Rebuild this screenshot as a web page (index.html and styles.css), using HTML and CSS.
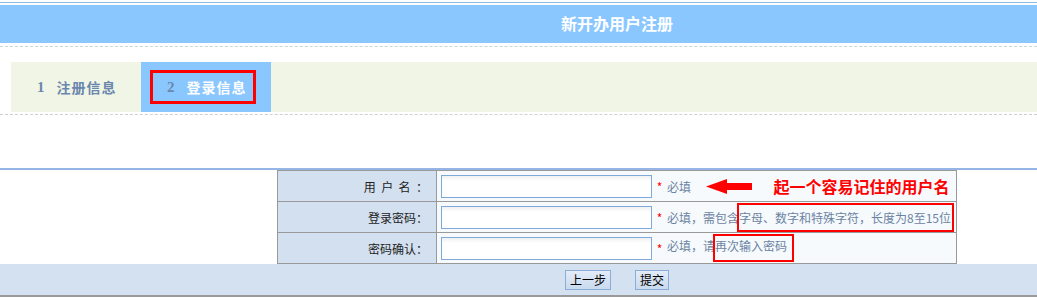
FILE: index.html
```html
<!DOCTYPE html>
<html lang="zh-CN">
<head>
    <meta charset="UTF-8">
    <meta name="viewport" content="width=device-width, initial-scale=1.0">
    <title>新开办用户注册</title>
    <link rel="stylesheet" href="styles.css">
</head>
<body>
    <div class="topline"></div>
    <div class="header">
        <div class="header-title">新开办用户注册</div>
    </div>
    <div class="dash dash-top"></div>

    <div class="steps">
        <div class="step">
            <span class="step-num">1</span>
            <span class="step-name">注册信息</span>
        </div>
        <div class="step step-active">
            <span class="step-mark">
                <span class="step-num">2</span>
                <span class="step-name">登录信息</span>
            </span>
        </div>
    </div>
    <div class="dash dash-bottom"></div>

    <div class="form-line"></div>
    <table class="form-table">
        <colgroup>
            <col class="col-label">
            <col class="col-field">
        </colgroup>
        <tr>
            <td class="label">用&nbsp;&nbsp;户&nbsp;&nbsp;名&nbsp;&nbsp;：</td>
            <td class="field">
                <input type="text" class="text-input">
                <span class="star">*</span>
                <span class="hint">必填</span>
                <svg class="arrow" width="46" height="15" viewBox="0 0 46 15">
                    <polygon points="0,7.5 21,0 21,4 46,4 46,11 21,11 21,15" fill="#ff0000"/>
                </svg>
                <span class="note">起一个容易记住的用户名</span>
            </td>
        </tr>
        <tr>
            <td class="label">登录密码：</td>
            <td class="field">
                <input type="password" class="text-input">
                <span class="star">*</span>
                <span class="hint">必填，需包含<span class="mark mark-pwd">字母、数字和特殊字符，长度为8至15位</span></span>
            </td>
        </tr>
        <tr>
            <td class="label">密码确认：</td>
            <td class="field">
                <input type="password" class="text-input">
                <span class="star">*</span>
                <span class="hint">必填，请<span class="mark mark-confirm">再次输入密码</span></span>
            </td>
        </tr>
    </table>
    <div class="actions">
        <div class="actions-inner">
            <button class="btn btn-prev">上一步</button>
            <button class="btn btn-submit">提交</button>
        </div>
    </div>
</body>
</html>
```

FILE: styles.css
```css
body {
    margin: 0;
    font-family: "Noto Sans CJK SC", "Liberation Sans", sans-serif;
    font-size: 12px;
    color: #333;
    background-color: #fff;
}

.topline {
    margin-top: 2px;
    height: 1px;
    background-color: #8cbae6;
}

.header {
    margin-top: 2px;
    height: 38px;
    background-color: #8bc7ff;
}

.header-title {
    margin-left: 277px;
    width: 680px;
    text-align: center;
    line-height: 36px;
    font-size: 16px;
    font-weight: bold;
    color: #fff;
}

.dash {
    height: 0;
    border-top: 1px dashed #c9d7d7;
}

.dash-top {
    margin-top: 3px;
}

.steps {
    display: flex;
    margin-top: 15px;
    margin-left: 11px;
    height: 50px;
    background-color: #f1f5e5;
}

.step {
    display: flex;
    align-items: center;
    width: 130px;
    padding-left: 26px;
    box-sizing: border-box;
    font-size: 14px;
    font-weight: bold;
    color: #6a87ae;
}

.step-num {
    margin-right: 12px;
    font-family: "Liberation Serif", serif;
    font-size: 15px;
}

.step-name {
    letter-spacing: 1px;
}

.step-active {
    padding-left: 9px;
    background-color: #8bc7ff;
}

.step-active .step-name {
    color: #fff;
}

.step-mark {
    display: flex;
    align-items: center;
    width: 106px;
    height: 34px;
    padding-left: 14px;
    border: 3px solid #ff0000;
    box-sizing: border-box;
}

.dash-bottom {
    margin-top: 2px;
    border-top-color: #d0d0d0;
}

.form-line {
    margin-top: 53px;
    height: 2px;
    background-color: #94b5e5;
}

.form-table {
    margin-left: 277px;
    width: 680px;
    table-layout: fixed;
    border-collapse: collapse;
}

.col-label {
    width: 159px;
}

.form-table td {
    height: 30px;
    padding: 0;
    border: 1px solid #999;
}

.label {
    padding-right: 8px !important;
    text-align: right;
    background-color: #d3e0f0;
    color: #222;
}

.field {
    padding-left: 4px !important;
    background-color: #f6fafc;
    white-space: nowrap;
}

.text-input {
    width: 211px;
    height: 23px;
    margin: 0;
    padding: 0 3px;
    box-sizing: border-box;
    border: 1px solid #7fa9d9;
    background: linear-gradient(#f0f0f0, #fff 5px);
    vertical-align: middle;
}

.star {
    margin-left: 2px;
    color: #ff0000;
    vertical-align: middle;
}

.hint {
    margin-left: 2px;
    color: #6b83a3;
    vertical-align: middle;
}

.arrow {
    margin-left: 12px;
    vertical-align: middle;
}

.note {
    margin-left: 19px;
    font-size: 16px;
    font-weight: bold;
    color: #ff0000;
    vertical-align: middle;
}

.mark {
    display: inline-block;
    border: 2px solid #ff0000;
    box-sizing: border-box;
    vertical-align: baseline;
}

.mark-pwd {
    line-height: 17px;
    padding: 4px 1px 4px 0;
    margin-left: -2px;
}

.mark-confirm {
    line-height: 17px;
    padding: 1px 5px 6px 0;
    margin-left: -2px;
}

.actions {
    height: 31px;
    border-bottom: 2px solid #999;
    background-color: #d4e1f1;
}

.actions-inner {
    display: flex;
    justify-content: center;
    align-items: center;
    gap: 24px;
    margin-left: 277px;
    width: 680px;
    height: 31px;
}

.btn {
    height: 20px;
    padding: 0 4px;
    font-family: "Noto Sans CJK SC", sans-serif;
    font-size: 12px;
    color: #000;
    border: 1px solid #8aaed8;
    background: linear-gradient(#e3ecf7, #c9d9ee);
    cursor: pointer;
}
```
